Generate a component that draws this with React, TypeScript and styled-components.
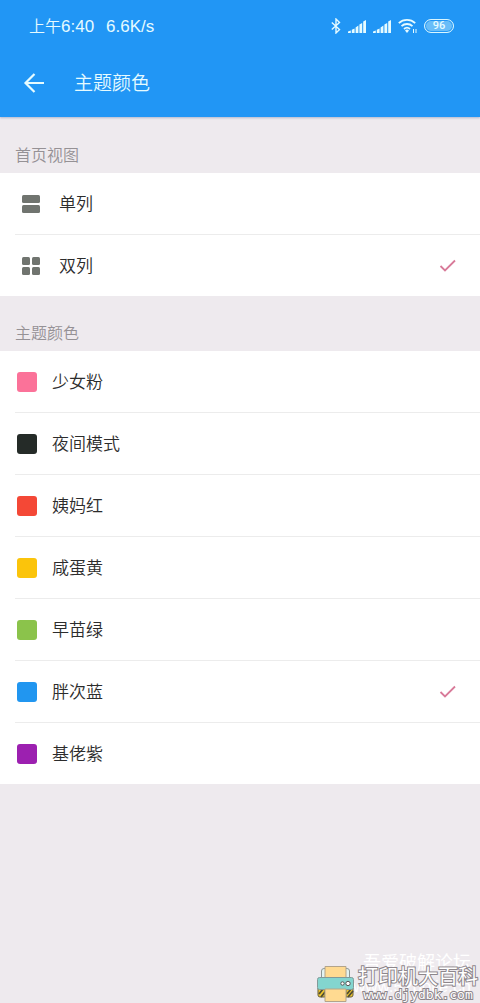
import React, { useState } from "react";
import styled, { createGlobalStyle } from "styled-components";

const GlobalStyle = createGlobalStyle`
  *, *::before, *::after { box-sizing: border-box; }
  body {
    margin: 0;
    background: #eeeaee;
    font-family: Roboto, "Noto Sans CJK SC", sans-serif;
  }
`;

const Page = styled.div`
  position: relative;
  min-height: 100vh;
  background: #eeeaee;
  overflow: hidden;
`;

const Header = styled.header`
  background: #2196f5;
  color: #e6fbff;
  box-shadow: 0 1px 2px rgba(60, 90, 150, 0.35);
`;

const StatusBar = styled.div`
  display: flex;
  align-items: center;
  justify-content: space-between;
  height: 52px;
  padding: 0 26px 0 29px;
`;

const StatusText = styled.div`
  display: flex;
  align-items: baseline;
  padding-top: 2px;
  font-family: "Liberation Sans", "Noto Sans CJK SC", sans-serif;
  font-size: 17px;
  line-height: 24px;
`;

const Meridiem = styled.span`
  font-size: 16px;
  font-weight: 350;
`;

const Speed = styled.span`
  margin-left: 12px;
`;

const StatusIcons = styled.div`
  display: flex;
  align-items: center;
  gap: 7px;
`;

const Battery = styled.span`
  width: 30px;
  height: 14px;
  border: 1px solid #d9f6ff;
  border-radius: 7px;
  background: #69bdf8;
  box-shadow: inset 0 0 0 1px #2196f5;
  font-size: 11px;
  font-weight: 500;
  line-height: 12px;
  text-align: center;
`;

const TitleBar = styled.div`
  display: flex;
  align-items: center;
  gap: 28px;
  height: 65px;
  padding: 0 22px 3px;
`;

const BackButton = styled.button`
  display: flex;
  padding: 0;
  border: 0;
  background: none;
  color: inherit;
  cursor: pointer;
`;

const Title = styled.h1`
  margin: 0;
  padding-top: 2px;
  font-size: 19px;
  font-weight: 350;
  line-height: 24px;
`;

const Group = styled.fieldset`
  min-width: 0;
  margin: 0;
  padding: 0;
  border: 0;
`;

const GroupLabel = styled.legend`
  width: 100%;
  height: 55px;
  padding: 26px 15px 0;
  color: #959195;
  font-size: 16px;
  font-weight: 350;
  line-height: 24px;
`;

const List = styled.div`
  background: #fff;
`;

const Row = styled.label<{ $gap: number; $indent: number }>`
  display: flex;
  align-items: center;
  gap: ${(p) => p.$gap}px;
  height: 62px;
  margin-left: 15px;
  padding: 0 24px 0 ${(p) => p.$indent}px;
  border-bottom: 1px solid #ececec;
  color: #2c2c2c;
  font-size: 17px;
  font-weight: 350;
  cursor: pointer;

  &:last-child {
    height: 61px;
    border-bottom: 0;
  }
`;

const RowText = styled.span`
  flex: 1;
  line-height: 24px;
`;

const Radio = styled.input`
  position: absolute;
  opacity: 0;
  pointer-events: none;

  & + svg {
    visibility: hidden;
  }

  &:checked + svg {
    visibility: visible;
  }
`;

const Swatch = styled.span<{ $color: string }>`
  width: 20px;
  height: 20px;
  border-radius: 3px;
  background: ${(p) => p.$color};
`;

const Main = styled.main`
  padding-top: 1px;
`;

const Watermark = styled.div`
  position: absolute;
  right: 2px;
  bottom: 0;
  display: flex;
  align-items: flex-end;
  gap: 4px;
`;

const ForumMark = styled.div`
  position: absolute;
  right: 9px;
  bottom: 4px;
  color: #fff;
  font-size: 18px;
  line-height: 24px;
  text-align: right;
`;

const ForumAddress = styled.div`
  font-family: "Liberation Sans", sans-serif;
  font-size: 17px;
`;

const SiteMark = styled.div`
  color: #fff;
  text-align: center;
  -webkit-text-stroke: 2px #8d868b;
  paint-order: stroke fill;
`;

const SiteName = styled.div`
  font-size: 20px;
  font-weight: 400;
  line-height: 20px;
`;

const SiteAddress = styled.div`
  font-family: "DejaVu Sans Mono", monospace;
  font-size: 13px;
  line-height: 16px;
`;

const Check = () => (
  <svg width="17" height="14" viewBox="0 0 17 14" fill="none" stroke="#d87a99" strokeWidth="1.8" aria-hidden="true">
    <path d="M1.500 7 6 11.500 16 1.500" />
  </svg>
);

const SingleIcon = () => (
  <svg width="18" height="18" viewBox="0 0 18 18" fill="#70746f" aria-hidden="true">
    <rect y="0" width="18" height="8" rx="1.5" />
    <rect y="10" width="18" height="8" rx="1.5" />
  </svg>
);

const DoubleIcon = () => (
  <svg width="18" height="18" viewBox="0 0 18 18" fill="#70746f" aria-hidden="true">
    <rect width="8" height="8" rx="1.5" />
    <rect x="10" width="8" height="8" rx="1.5" />
    <rect y="10" width="8" height="8" rx="1.5" />
    <rect x="10" y="10" width="8" height="8" rx="1.5" />
  </svg>
);

const Bluetooth = () => (
  <svg width="10" height="16" viewBox="0 0 10 16" fill="none" stroke="currentColor" strokeWidth="1.4" aria-hidden="true">
    <path d="M.8 4.5 8.5 11.5 5 15V1l3.5 3.5L.8 11.5" />
  </svg>
);

const Signal = () => (
  <svg width="18" height="13" viewBox="0 0 18 13" fill="currentColor" aria-hidden="true">
    <path d="M0 11.500 2.800 10.500V13H0zM3.800 9.700 6.600 8.500V13H3.800zM7.600 7.500 10.400 5.500V13H7.600zM11.400 4.500 14.200 3V13h-2.800zM15.200 1.500 18 0V13h-2.800z" />
  </svg>
);

const Wifi = () => (
  <svg width="19" height="16" viewBox="0 0 19 16" fill="none" stroke="currentColor" strokeWidth="1.8" aria-hidden="true">
    <path d="M.8 5.200a12 12 0 0 1 16.400 0M3.500 8.200a8 8 0 0 1 11 0M6 11a4.500 4.500 0 0 1 6 0" />
    <path d="M7 12.500a3 3 0 0 1 4 0L9 15z" fill="currentColor" stroke="none" />
    <path d="M15.500 11v4M18 11v4" strokeWidth="1" />
  </svg>
);

const Printer = () => (
  <svg width="37" height="37" viewBox="0 0 37 37" aria-hidden="true">
    <path d="M4.500 12V5q0-2.500 2.500-2.500h23q2.500 0 2.500 2.500v7z" fill="#e3f3f2" stroke="#8b9696" />
    <path d="M8 .5h21v12H8z" fill="#ffda91" stroke="#b3a48a" />
    <path d="M1 22h7v9H3q-2 0-2-2zM29 22h7v7q0 2-2 2h-5z" fill="#edc52f" stroke="#665d36" />
    <path d="m2 28 4-5M4 31l4-5M30 28l4-5M31 31l5-6" stroke="#514d32" strokeWidth="1.8" />
    <rect x=".5" y="11.500" width="36" height="12" rx="2" fill="#83d5cf" stroke="#829a99" />
    <path d="M8 23h21v12.500H8z" fill="#ffda91" stroke="#b3a48a" />
    <circle cx="25.500" cy="17.500" r="1.700" fill="#fff" stroke="#555" />
    <circle cx="31" cy="17.500" r="2.200" fill="#fff" stroke="#555" />
  </svg>
);

const views = [
  { name: "单列", icon: <SingleIcon /> },
  { name: "双列", icon: <DoubleIcon /> },
];

const themes = [
  { name: "少女粉", color: "#fb7299" },
  { name: "夜间模式", color: "#252b28" },
  { name: "姨妈红", color: "#f44836" },
  { name: "咸蛋黄", color: "#fbc40b" },
  { name: "早苗绿", color: "#8bc34b" },
  { name: "胖次蓝", color: "#2196f0" },
  { name: "基佬紫", color: "#9c20b0" },
];

export default function App() {
  const [view, setView] = useState("双列");
  const [theme, setTheme] = useState("胖次蓝");

  return (
    <Page>
      <GlobalStyle />
      <Header>
        <StatusBar>
          <StatusText>
            <Meridiem>上午</Meridiem>
            <span>6:40</span>
            <Speed>6.6K/s</Speed>
          </StatusText>
          <StatusIcons>
            <Bluetooth />
            <Signal />
            <Signal />
            <Wifi />
            <Battery>96</Battery>
          </StatusIcons>
        </StatusBar>
        <TitleBar>
          <BackButton type="button" aria-label="返回">
            <svg width="24" height="24" viewBox="0 0 24 24" fill="none" stroke="currentColor" strokeWidth="2.200">
              <path d="M22 12H4M12.500 3l-9 9 9 9" />
            </svg>
          </BackButton>
          <Title>主题颜色</Title>
        </TitleBar>
      </Header>
      <Main>
        <Group>
          <GroupLabel>首页视图</GroupLabel>
          <List>
            {views.map((v) => (
              <Row key={v.name} $gap={19} $indent={7}>
                {v.icon}
                <RowText>{v.name}</RowText>
                <Radio type="radio" name="view" checked={view === v.name} onChange={() => setView(v.name)} />
                <Check />
              </Row>
            ))}
          </List>
        </Group>
        <Group>
          <GroupLabel>主题颜色</GroupLabel>
          <List>
            {themes.map((t) => (
              <Row key={t.name} $gap={15} $indent={2}>
                <Swatch $color={t.color} />
                <RowText>{t.name}</RowText>
                <Radio type="radio" name="theme" checked={theme === t.name} onChange={() => setTheme(t.name)} />
                <Check />
              </Row>
            ))}
          </List>
        </Group>
      </Main>
      <ForumMark>
        <div>吾爱破解论坛</div>
        <ForumAddress>www.52pojie.cn</ForumAddress>
      </ForumMark>
      <Watermark>
        <Printer />
        <SiteMark>
          <SiteName>打印机大百科</SiteName>
          <SiteAddress>www.djydbk.com</SiteAddress>
        </SiteMark>
      </Watermark>
    </Page>
  );
}
